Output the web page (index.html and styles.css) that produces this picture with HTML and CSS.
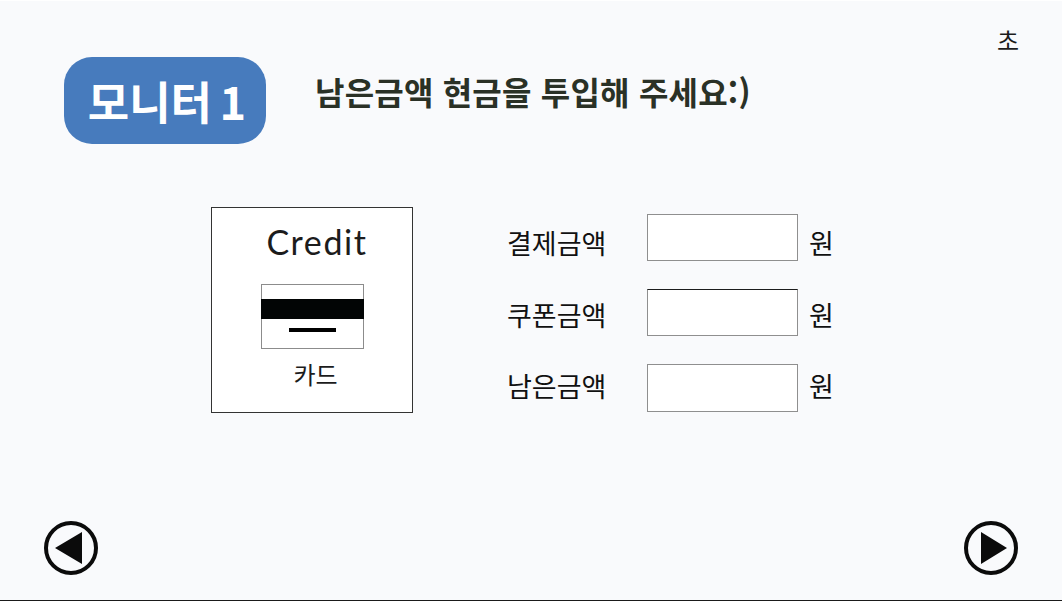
FILE: index.html
```html
<!DOCTYPE html>
<html lang="ko">
<head>
  <meta charset="UTF-8" />
  <meta name="viewport" content="width=device-width, initial-scale=1.0" />
  <title>모니터 1</title>
  <link rel="stylesheet" href="styles.css">
</head>
<body>
  <section class="screen">
    <!-- 상단 -->
    <div class="timer">초</div>
    <div class="header">
      <h1 class="badge">모니터 1</h1>
      <p class="title">남은금액 현금을 투입해 주세요:)</p>
    </div>

    <!-- 결제 정보 -->
    <div class="main">
      <div class="card-box">
        <div class="card-name">Credit</div>
        <div class="card-icon">
          <div class="card-stripe"></div>
          <div class="card-line"></div>
        </div>
        <div class="card-label">카드</div>
      </div>
      <div class="amounts">
        <div class="amount-row row-pay">
          <span class="amount-label">결제금액</span>
          <input class="amount-input" type="text" />
          <span class="amount-unit">원</span>
        </div>
        <div class="amount-row row-coupon">
          <span class="amount-label">쿠폰금액</span>
          <input class="amount-input" type="text" />
          <span class="amount-unit">원</span>
        </div>
        <div class="amount-row row-left">
          <span class="amount-label">남은금액</span>
          <input class="amount-input" type="text" />
          <span class="amount-unit">원</span>
        </div>
      </div>
    </div>

    <!-- 이전 / 다음 -->
    <div class="nav">
      <svg class="nav-btn" viewBox="0 0 54 54" aria-label="이전">
        <circle cx="27" cy="27" r="25" fill="none" stroke="#0b0b0b" stroke-width="4" />
        <polygon points="11,27 38,11 38,43" fill="#0b0b0b" />
      </svg>
      <svg class="nav-btn" viewBox="0 0 54 54" aria-label="다음">
        <circle cx="27" cy="27" r="25" fill="none" stroke="#0b0b0b" stroke-width="4" />
        <polygon points="43,27 17,11 17,43" fill="#0b0b0b" />
      </svg>
    </div>
  </section>
</body>
</html>
```

FILE: styles.css
```css
* { box-sizing: border-box; }
html, body { height: 100%; }
body {
  margin: 0;
  background: #fff;
  overflow: hidden;
  font-family: "Noto Sans CJK KR", "Noto Sans", sans-serif;
  color: #1c1c1c;
}
.screen {
  position: relative;
  height: 601px;
  padding-top: 57px;
  background: #f9fafc;
  border-top: 1px solid #fff;
  border-bottom: 1px solid #1a1a1a;
  display: flex;
  flex-direction: column;
}
.timer {
  position: absolute;
  top: 22px; right: 43px;
  font-size: 24px; line-height: 34px;
}
.header {
  display: flex;
  align-items: flex-start;
  gap: 49px;
  padding-left: 64px;
  margin-top: -1px;
}
.badge {
  width: 202px; height: 87px;
  margin: 0;
  padding-left: 4px;
  background: #477bbd;
  border-radius: 28px;
  color: #fff;
  font-size: 45px; font-weight: 700;
  line-height: 88px;
  word-spacing: -5px;
  text-align: center;
}
.title {
  margin: 12px 0 0;
  font-size: 32px; font-weight: 700;
  line-height: 44px;
  letter-spacing: .2px;
  color: #2a3126;
}
.main {
  display: flex;
  align-items: flex-start;
  gap: 94px;
  padding: 63px 0 0 211px;
}
.card-box {
  width: 202px; height: 206px;
  background: #fff;
  border: 1px solid #333;
  display: flex;
  flex-direction: column;
  align-items: center;
}
.card-name {
  margin: 14px 0 0 10px;
  font-family: "Lato", sans-serif;
  font-size: 34px; line-height: 40px;
  letter-spacing: 1.6px;
}
.card-icon {
  width: 103px; height: 65px;
  margin-top: 22px;
  background: #fff;
  border: 1px solid #8c8c8c;
  display: flex;
  flex-direction: column;
  align-items: center;
}
.card-stripe {
  align-self: stretch;
  height: 20px;
  margin: 14px -1px 0;
  background: #020505;
}
.card-line {
  width: 47px; height: 4px;
  margin-top: 9px;
  background: #000;
}
.card-label {
  margin: 7px 0 0 7px;
  font-size: 24px; line-height: 36px;
}
.amounts {
  display: flex;
  flex-direction: column;
  gap: 28px;
  padding-top: 7px;
}
.amount-row {
  display: flex;
  align-items: center;
  height: 47px;
  color: #111;
}
.amount-label {
  width: 140px;
  font-size: 27px;
}
.amount-input {
  width: 151px; height: 47px;
  background: #fff;
  border: 1px solid #8f8f8f;
  border-radius: 0;
  padding: 0;
  outline: none;
}
.amount-unit {
  margin-left: 11px;
  font-size: 27px;
}
/* 글자 높이가 칸마다 조금씩 다름 */
.row-pay .amount-label, .row-pay .amount-unit { padding-top: 10px; }
.row-coupon .amount-label, .row-coupon .amount-unit { padding-top: 4px; }
.row-coupon .amount-input { border-top-color: #1c1c1c; }
.row-left .amount-label, .row-left .amount-unit { padding-bottom: 4px; }
.row-left .amount-input { height: 48px; }
.nav {
  display: flex;
  justify-content: space-between;
  margin-top: auto;
  padding: 0 44px 25px;
}
.nav-btn {
  display: block;
  width: 54px; height: 54px;
}
```
